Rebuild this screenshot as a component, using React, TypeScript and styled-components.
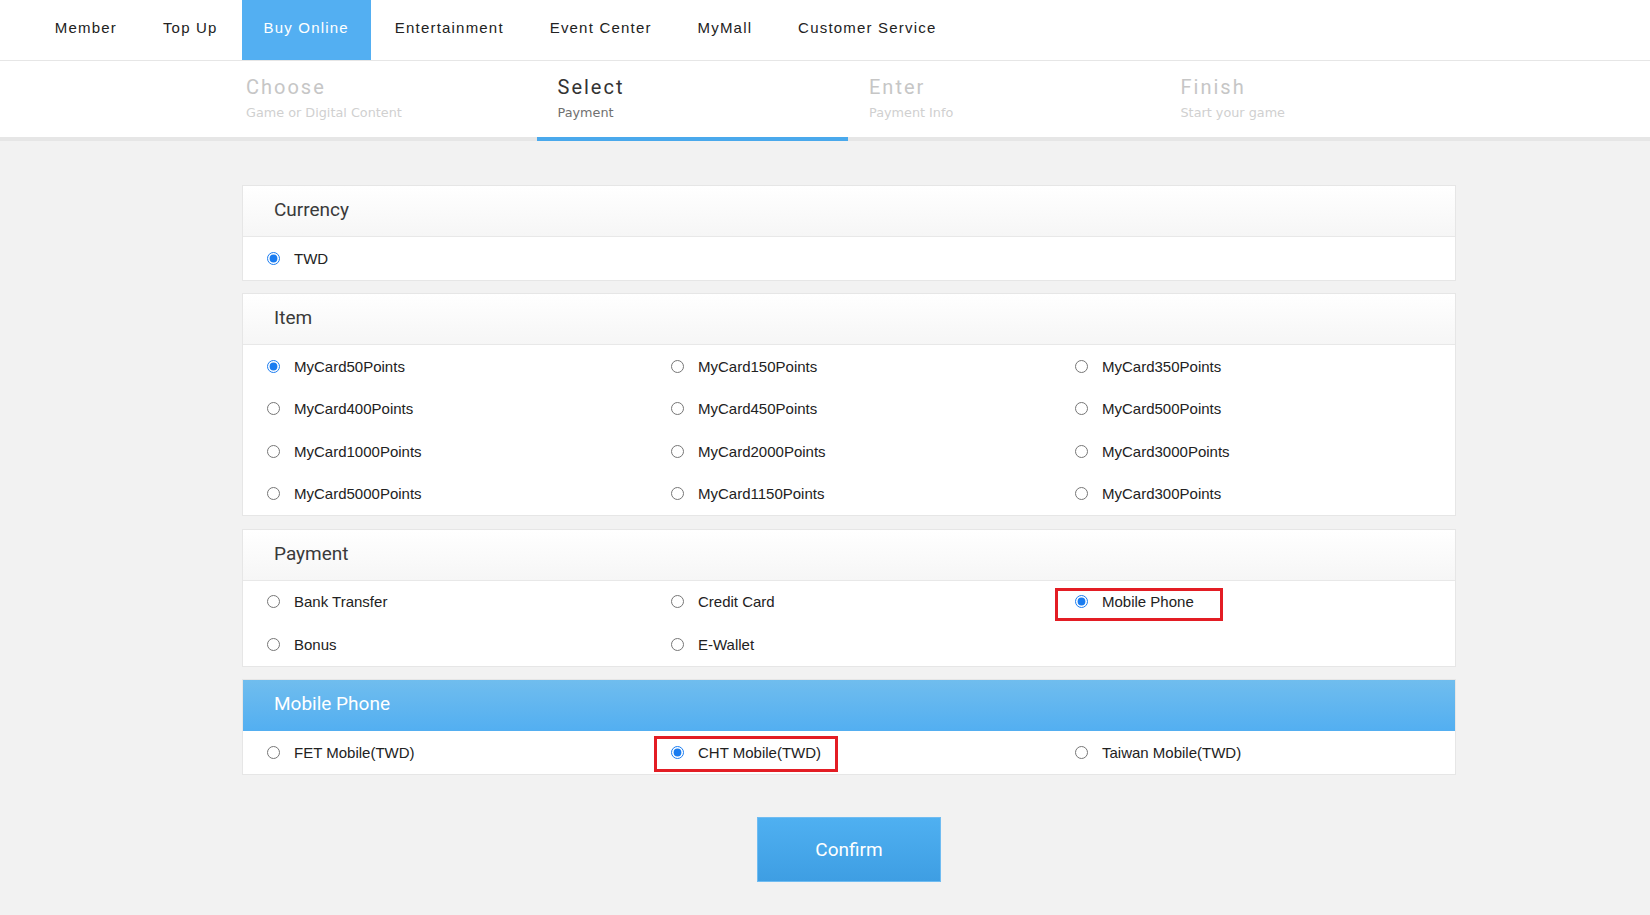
import React from "react";
import styled, { createGlobalStyle } from "styled-components";

const GlobalStyle = createGlobalStyle`
  html, body { margin: 0; padding: 0; background: #f2f2f2; }
  body { font-family: "Liberation Sans", Arial, sans-serif; }
  * { box-sizing: border-box; }
`;

const Page = styled.div`
  min-height: 915px;
  background: #f2f2f2;
`;

const TopNav = styled.nav`
  display: flex;
  gap: 2.3px;
  height: 61px;
  padding-left: 33px;
  background: #fff;
  border-bottom: 1px solid #e6e6e6;
`;

const NavItem = styled.a<{ $active?: boolean }>`
  display: block;
  height: 60px;
  padding: 0 21.8px;
  line-height: 55px;
  font-family: "Liberation Sans", Arial, sans-serif;
  font-size: 15px;
  letter-spacing: 1.2px;
  color: ${(p) => (p.$active ? "#fff" : "#222")};
  background: ${(p) => (p.$active ? "#53aff2" : "transparent")};
  text-decoration: none;
  white-space: nowrap;
`;

const StepsBar = styled.div`
  background: #fff;
  border-bottom: 4px solid #e6e6e6;
`;

const StepsInner = styled.div`
  width: 1246px;
  margin-left: 225px;
  margin-bottom: -4px;
  display: grid;
  grid-template-columns: repeat(4, 1fr);
`;

const Step = styled.div<{ $active?: boolean }>`
  height: 80px;
  padding: 14px 0 0 21px;
  border-bottom: 4px solid ${(p) => (p.$active ? "#4aa9ec" : "transparent")};
`;

const StepTitle = styled.div<{ $active?: boolean }>`
  font-family: Roboto, "Liberation Sans", sans-serif;
  font-size: 20px;
  line-height: 24px;
  letter-spacing: 2px;
  color: ${(p) => (p.$active ? "#333" : "#c6c6c6")};
`;

const StepSub = styled.div<{ $active?: boolean }>`
  margin-top: 6px;
  font-family: "DejaVu Sans", Verdana, sans-serif;
  font-size: 12.8px;
  line-height: 16px;
  color: ${(p) => (p.$active ? "#707070" : "#d0d0d0")};
`;

const Main = styled.main`
  width: 1214px;
  margin-left: 242px;
  padding-top: 44px;
  padding-bottom: 32px;
`;

const Panel = styled.section`
  background: #fff;
  border: 1px solid #e6e6e6;
  margin-bottom: 12.5px;
`;

const PanelHeader = styled.h2<{ $blue?: boolean }>`
  margin: 0;
  height: 51px;
  padding-left: 31px;
  line-height: 48px;
  font-family: Roboto, "Liberation Sans", sans-serif;
  font-size: 19px;
  font-weight: 400;
  color: ${(p) => (p.$blue ? "#fff" : "#3a3a3a")};
  background: ${(p) =>
    p.$blue
      ? "linear-gradient(to bottom, #70bdee, #53aff1)"
      : "linear-gradient(to bottom, #ffffff, #f6f6f6)"};
  border-bottom: 1px solid ${(p) => (p.$blue ? "#53aff1" : "#e8e8e8")};
`;

const OptionGrid = styled.div`
  display: grid;
  grid-template-columns: repeat(3, 1fr);
`;

const Option = styled.label`
  position: relative;
  display: flex;
  align-items: center;
  height: 42.5px;
  font-family: "Liberation Sans", Arial, sans-serif;
  font-size: 15px;
  color: #222;
  cursor: pointer;
`;

const Radio = styled.input`
  width: 13px;
  height: 13px;
  margin: 0 14px 0 24px;
  accent-color: #1a7cf0;
`;

const Highlight = styled.span<{ $left: number; $top: number; $w: number; $h: number }>`
  position: absolute;
  left: ${(p) => p.$left}px;
  top: ${(p) => p.$top}px;
  width: ${(p) => p.$w}px;
  height: ${(p) => p.$h}px;
  border: 3px solid #e31d24;
  pointer-events: none;
`;

const ConfirmRow = styled.div`
  display: flex;
  justify-content: center;
  padding-top: 30px;
`;

const ConfirmButton = styled.button`
  width: 184px;
  height: 65px;
  border: 1px solid #6fbcf2;
  background: linear-gradient(to bottom, #4fb0f1, #3e9ee3);
  color: #fff;
  font-family: Roboto, "Liberation Sans", sans-serif;
  font-size: 19px;
  cursor: pointer;
`;

type Opt = {
  label: string;
  checked?: boolean;
  hl?: { left: number; top: number; w: number; h: number };
};

const navItems = [
  "Member",
  "Top Up",
  "Buy Online",
  "Entertainment",
  "Event Center",
  "MyMall",
  "Customer Service",
];

const steps = [
  { t: "Choose", s: "Game or Digital Content" },
  { t: "Select", s: "Payment", active: true },
  { t: "Enter", s: "Payment Info" },
  { t: "Finish", s: "Start your game" },
];

const sections: { title: string; name: string; blue?: boolean; opts: Opt[] }[] = [
  { title: "Currency", name: "currency", opts: [{ label: "TWD", checked: true }] },
  {
    title: "Item",
    name: "item",
    opts: [
      { label: "MyCard50Points", checked: true },
      { label: "MyCard150Points" },
      { label: "MyCard350Points" },
      { label: "MyCard400Points" },
      { label: "MyCard450Points" },
      { label: "MyCard500Points" },
      { label: "MyCard1000Points" },
      { label: "MyCard2000Points" },
      { label: "MyCard3000Points" },
      { label: "MyCard5000Points" },
      { label: "MyCard1150Points" },
      { label: "MyCard300Points" },
    ],
  },
  {
    title: "Payment",
    name: "payment",
    opts: [
      { label: "Bank Transfer" },
      { label: "Credit Card" },
      { label: "Mobile Phone", checked: true, hl: { left: 4, top: 7, w: 168, h: 33 } },
      { label: "Bonus" },
      { label: "E-Wallet" },
    ],
  },
  {
    title: "Mobile Phone",
    name: "mobile",
    blue: true,
    opts: [
      { label: "FET Mobile(TWD)" },
      { label: "CHT Mobile(TWD)", checked: true, hl: { left: 7, top: 5, w: 184, h: 36 } },
      { label: "Taiwan Mobile(TWD)" },
    ],
  },
];

export default function App() {
  return (
    <Page>
      <GlobalStyle />
      <TopNav>
        {navItems.map((n) => (
          <NavItem key={n} $active={n === "Buy Online"}>
            {n}
          </NavItem>
        ))}
      </TopNav>
      <StepsBar>
        <StepsInner>
          {steps.map((s) => (
            <Step key={s.t} $active={s.active}>
              <StepTitle $active={s.active}>{s.t}</StepTitle>
              <StepSub $active={s.active}>{s.s}</StepSub>
            </Step>
          ))}
        </StepsInner>
      </StepsBar>
      <Main>
        {sections.map((sec) => (
          <Panel key={sec.name}>
            <PanelHeader $blue={sec.blue}>{sec.title}</PanelHeader>
            <OptionGrid>
              {sec.opts.map((o) => (
                <Option key={o.label}>
                  <Radio type="radio" name={sec.name} defaultChecked={o.checked} />
                  {o.label}
                  {o.hl && <Highlight $left={o.hl.left} $top={o.hl.top} $w={o.hl.w} $h={o.hl.h} />}
                </Option>
              ))}
            </OptionGrid>
          </Panel>
        ))}
        <ConfirmRow>
          <ConfirmButton>Confirm</ConfirmButton>
        </ConfirmRow>
      </Main>
    </Page>
  );
}
